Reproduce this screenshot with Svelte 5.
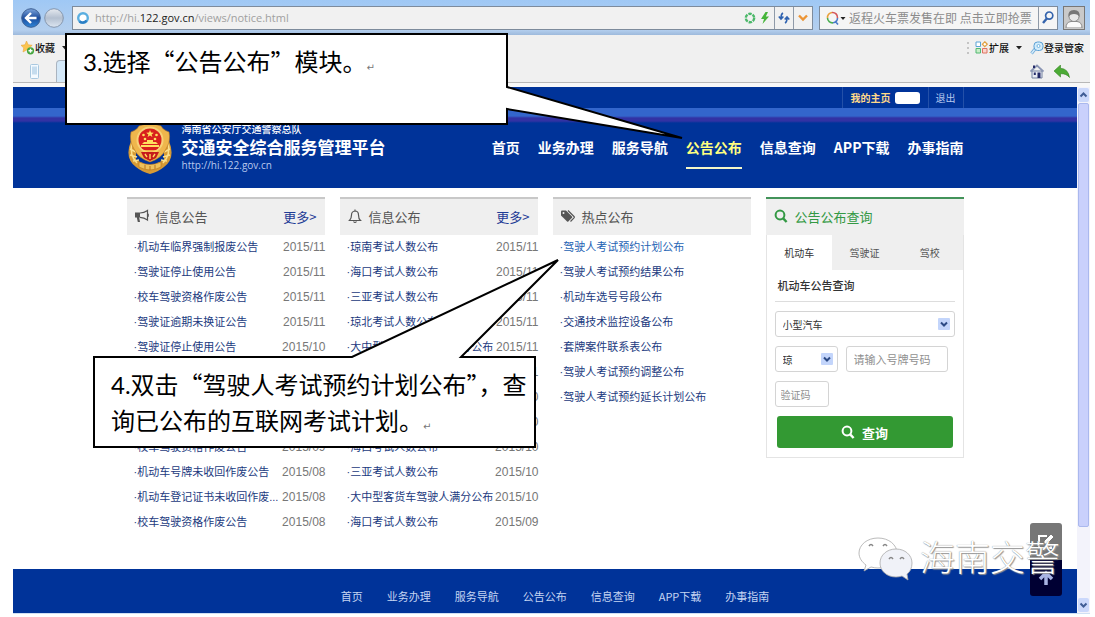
<script>
  const nav = ['首页', '业务办理', '服务导航', '公告公布', '信息查询', 'APP下载', '办事指南'];
  const notices = [
    ['机动车临界强制报废公告', '2015/11'],
    ['驾驶证停止使用公告', '2015/11'],
    ['校车驾驶资格作废公告', '2015/11'],
    ['驾驶证逾期未换证公告', '2015/11'],
    ['驾驶证停止使用公告', '2015/10'],
    ['', ''],
    ['', ''],
    ['', ''],
    ['校车驾驶资格作废公告', '2015/09'],
    ['机动车号牌未收回作废公告', '2015/08'],
    ['机动车登记证书未收回作废...', '2015/08'],
    ['校车驾驶资格作废公告', '2015/08'],
  ];
  const releases = [
    ['琼南考试人数公布', '2015/11'],
    ['海口考试人数公布', '2015/11'],
    ['三亚考试人数公布', '2015/11'],
    ['琼北考试人数公布', '2015/11'],
    ['大中型客货车驾驶人满分公布', '2015/11'],
    ['', '2015/11'],
    ['', '2015/10'],
    ['', '2015/10'],
    ['海口考试人数公布', '2015/10'],
    ['三亚考试人数公布', '2015/10'],
    ['大中型客货车驾驶人满分公布', '2015/10'],
    ['海口考试人数公布', '2015/09'],
  ];
  const hot = [
    '驾驶人考试预约计划公布', '驾驶人考试预约结果公布', '机动车选号号段公布',
    '交通技术监控设备公布', '套牌案件联系表公布', '驾驶人考试预约调整公布', '驾驶人考试预约延长计划公布',
  ];
  const tabs = ['机动车', '驾驶证', '驾校'];
  let tab = $state('机动车');
</script>

{#snippet rows(items)}
  <ul class="list">
    {#each items as [title, date]}
      <li>{#if title}<a href="#item">·{title}</a>{/if}{#if date}<time>{date}</time>{/if}</li>
    {/each}
  </ul>
{/snippet}

{#snippet magnifier()}
  <svg width="14" height="14" viewBox="0 0 14 14" fill="none" stroke="currentColor" aria-hidden="true">
    <circle cx="6" cy="6" r="4.4" stroke-width="2" /><path d="M9.2 9.4 12.6 13" stroke-width="2.4" />
  </svg>
{/snippet}

{#snippet chevron()}
  <svg class="chev" width="12" height="12" viewBox="0 0 12 12" aria-hidden="true">
    <rect width="12" height="12" rx="1" fill="#c3d5fb" /><path d="M3 4.5 6 7.5 9 4.5" fill="none" stroke="#2c4a85" stroke-width="2" />
  </svg>
{/snippet}

<div class="window">
  <div class="address-row">
    <button class="round" aria-label="后退">
      <svg width="20" height="20" viewBox="0 0 20 20">
        <defs><linearGradient id="b" x2="0" y2="1"><stop stop-color="#7ea6dc" /><stop offset=".5" stop-color="#1c4c9c" /><stop offset="1" stop-color="#2f86d8" /></linearGradient></defs>
        <circle cx="10" cy="10" r="9.3" fill="url(#b)" stroke="#3e5f92" /><path d="M15.5 10H5.5M10 5 5 10l5 5" fill="none" stroke="#fff" stroke-width="2.4" />
      </svg>
    </button>
    <button class="round" aria-label="前进">
      <svg width="20" height="20" viewBox="0 0 20 20">
        <defs><linearGradient id="f" x2="0" y2="1"><stop stop-color="#e6eaf0" /><stop offset=".5" stop-color="#b4c0d0" /><stop offset="1" stop-color="#dce6f2" /></linearGradient></defs>
        <circle cx="10" cy="10" r="9.3" fill="url(#f)" stroke="#8596ad" />
      </svg>
    </button>
    <div class="field address">
      <svg width="14" height="14" viewBox="0 0 14 14"><circle cx="7" cy="7" r="4.8" fill="#fff" stroke="#5aaee0" stroke-width="2.4" /><path d="M3.5 10.5a4.8 4.8 0 0 0 7-1" fill="none" stroke="#2d7fc4" stroke-width="2.4" /></svg>
      <span class="url">http://hi.<b>122.gov.cn</b>/views/notice.html</span>
      <svg width="12" height="12" viewBox="0 0 12 12"><circle cx="6" cy="6" r="4.2" fill="none" stroke="#4cb86a" stroke-width="2.4" stroke-dasharray="3.4 1" /></svg>
      <svg width="8" height="12" viewBox="0 0 8 12"><path d="M4.5 0 0 7h3L1.5 12 8 4.500H4.800L7 0z" fill="#46b53a" /></svg>
      <button class="cell" aria-label="刷新"><svg width="12" height="12" viewBox="0 0 12 12" fill="none" stroke="#2f62b0" stroke-width="1.6"><path d="M5 1Q3 2 3 6M.8 4.500 3 7l2.400-2.500M7 11q2-1 2-5M6.700 7.500 9 5l2.300 2.500" /></svg></button>
      <button class="cell" aria-label="展开"><svg width="10" height="8" viewBox="0 0 10 8"><path d="M1 1.500 5 5.500 9 1.500" fill="none" stroke="#ec9434" stroke-width="2.400" /></svg></button>
    </div>
    <div class="field search">
      <svg width="20" height="14" viewBox="0 0 20 14" fill="none" stroke-width="1.600"><path d="M6 1.500A5 5 0 0 0 1.500 7" stroke="#e8a13c" /><path d="M1.500 7A5 5 0 0 0 7 11.800" stroke="#4aae50" /><path d="M6 1.500A5 5 0 0 1 11.500 7" stroke="#d4565a" /><path d="M11.500 7A5 5 0 0 1 7 11.800M9 10l3 3.500" stroke="#4b7bc9" /><path d="M14.500 6h5L17 9z" fill="#222" /></svg>
      <input aria-label="搜索" placeholder="返程火车票发售在即 点击立即抢票" />
      <button class="cell" aria-label="查找"><svg width="12" height="13" viewBox="0 0 12 13" fill="none" stroke="#3564ad"><circle cx="7.200" cy="4.600" r="3.600" stroke-width="1.700" /><path d="M4.800 7.400 1 12" stroke-width="2.400" /></svg></button>
    </div>
    <button class="avatar" aria-label="用户">
      <svg width="20" height="20" viewBox="0 0 20 20"><path d="M2 20q0-6 5-6.500h6q5 .5 5 6.500z" fill="#fafafa" stroke="#8a8a8a" /><circle cx="10" cy="8.500" r="5" fill="#e8e8e8" stroke="#8a8a8a" /><path d="M4.500 9Q3.500 2 10 2t5.500 7Q14 6 10 6T4.500 9z" fill="#777" /></svg>
    </button>
  </div>

  <div class="toolbar">
    <div class="tool-line">
      <svg width="14" height="14" viewBox="0 0 14 14"><path d="m5.500 0 1.700 3.800 4 .5-3 2.700.8 4-3.500-2L2 11l.8-4L0 4.300l4-.5z" fill="#fbc550" stroke="#e9a63c" stroke-width=".6" /><circle cx="9.500" cy="9.800" r="3.600" fill="#45a63f" /><path d="M9.500 7.800v4M7.500 9.800h4" stroke="#fff" stroke-width="1.400" /></svg>
      <button class="tool">收藏</button>
      <svg class="drop" width="6" height="4" viewBox="0 0 6 4"><path d="M0 0h6L3 3.500z" fill="#222" /></svg>
      <span class="fill"></span>
      <svg width="3" height="12" viewBox="0 0 3 12" fill="#c4c4c4"><path d="M0 0h2v2H0zM0 5h2v2H0zM0 10h2v2H0z" /></svg>
      <svg class="ext" width="13" height="13" viewBox="0 0 13 13" fill="#fff"><path d="M1 1h4.500v4.500H1z" stroke="#5aa4d8" /><path d="m9.800.8 2.500 2.400-2.500 2.500-2.400-2.500z" stroke="#e0a040" stroke-width="1.200" /><path d="M1 7.500h4.500V12H1z" fill="#c8eec8" stroke="#53b873" /><path d="M7.500 7.500H12V12H7.500z" fill="#fbd5cd" stroke="#dd7563" /></svg>
      <button class="tool">扩展</button>
      <svg class="drop ext-drop" width="6" height="4" viewBox="0 0 6 4"><path d="M0 0h6L3 3.500z" fill="#222" /></svg>
      <svg width="14" height="14" viewBox="0 0 14 14"><path d="M5 8 1.500 12.500" stroke="#70aad8" stroke-width="3" /><path d="M5 8 1.500 12.500" stroke="#d3ecfb" stroke-width="1.400" /><rect x="4" y="1" width="9" height="8.500" rx="3.500" fill="#d3ecfb" stroke="#5aa0d5" /><circle cx="8.500" cy="5" r="1.500" fill="#fff" stroke="#73b4df" /></svg>
      <button class="tool">登录管家</button>
    </div>
    <div class="tool-line tab-line">
      <span class="phone-tab"><svg width="9" height="15" viewBox="0 0 9 15"><rect x=".5" y=".5" width="8" height="14" rx="1" fill="#f4faff" stroke="#a9c8e0" /><path d="M2 2.500h5v8H2z" fill="#c5dcee" /></svg></span>
      <span class="page-tab"></span>
      <span class="fill"></span>
      <svg width="14" height="15" viewBox="0 0 14 15"><path d="M2 7h10v7H2z" fill="#e8ebf4" stroke="#7582a0" /><path d="M.5 7.500 7 1.500l6.500 6" fill="none" stroke="#8a95b4" stroke-width="1.800" /><path d="M7.500 8.500h3V14h-3zM3 1.500h2V4H3z" fill="#242a68" /><path d="M3.800 8.500h2V11h-2z" fill="#242a68" /></svg>
      <svg class="reply" width="16" height="13" viewBox="0 0 16 13"><path d="M6.500 0v3.300Q14 3.500 15.500 12.500 12.500 8.500 6.500 8.700V12L0 6z" fill="#4cab35" stroke="#358425" stroke-width=".6" /></svg>
    </div>
  </div>

  <div class="viewport">
    <div class="site">
      <div class="topbar"><div class="container account">
        <a class="home" href="#home">我的主页<i></i></a><a class="exit" href="#exit">退出</a>
      </div></div>
      <div class="stripe"></div>
      <header><div class="container head">
        <svg class="crest" width="46" height="52" viewBox="0 0 46 52" aria-hidden="true">
          <path d="M4 18Q-3 35 9 44q6 5 14 7 8-2 14-7 12-9 5-26l-5 5v14L23 43 9 37V23z" fill="#d79b35" />
          <path d="M5 19Q2 32 10 40M3 26l6 3M3 32l7 2M6 38l6-1M41 19q3 13-5 21M43 26l-6 3M43 32l-7 2M40 38l-6-1" fill="none" stroke="#fbe08c" stroke-width="1.600" />
          <path d="M23 0 34 3Q36 7 42 9q2 9-3 17-4 9-16 13Q11 35 7 26 2 18 4 9q6-2 8-6z" fill="#efb64c" stroke="#b9751f" stroke-width=".6" />
          <circle cx="23" cy="17" r="13.500" fill="#f7d277" /><circle cx="23" cy="17" r="11.500" fill="#d8201d" />
          <path d="m23 7 1 2.600 2.800.1-2.200 1.700.8 2.700-2.400-1.500-2.400 1.500.8-2.700-2.200-1.700 2.800-.1z" fill="#ffe05e" />
          <g fill="#ffe05e"><circle cx="16.500" cy="12" r="1.300" /><circle cx="29.500" cy="12" r="1.300" /><circle cx="18" cy="16" r="1.300" /><circle cx="28" cy="16" r="1.300" /><path d="M14 22h18v2H14zM17 19h12l2 2H15zM20 17h6v2h-6z" /></g>
          <path d="M14 29h18l-3 6-6 3-6-3z" fill="#c51a1c" /><path d="M16 28h14M23 31v5M18 31l2 3M28 31l-2 3" stroke="#ffd75c" stroke-width="1.400" />
          <path d="M12 39q11 5 22 0v5q-11 6-22 0z" fill="#eec15c" stroke="#b9751f" stroke-width=".6" /><path d="M18 42v4M23 43v4M28 42v4" stroke="#b9751f" />
        </svg>
        <div class="brand"><span>海南省公安厅交通警察总队</span><strong>交通安全综合服务管理平台</strong><small>http://hi.122.gov.cn</small></div>
        <nav>{#each nav as n}<a href="#nav" class:active={n === '公告公布'}>{n}</a>{/each}</nav>
      </div></header>

      <main class="container columns">
        <section>
          <h2>
            <svg width="14" height="14" viewBox="0 0 14 14"><path d="M0 3.500h5v5h-.800L5 13H2.800L1.800 8.500H0z" fill="#555" /><path d="M5 4Q9 4 12.500 1.500v9.500Q9 8.500 5 8.300" fill="none" stroke="#555" stroke-width="1.200" /><path d="M13 4.800v3" stroke="#555" stroke-width="1.600" /></svg>
            信息公告<a href="#more">更多&gt;</a>
          </h2>
          {@render rows(notices)}
        </section>
        <section>
          <h2>
            <svg width="14" height="15" viewBox="0 0 14 15" fill="none" stroke="#555" stroke-width="1.200"><path d="M1.500 11.500Q3.500 9.500 3.500 6T7 2q3.500 0 3.500 4t2 5.500zM7 .5V2M5.500 12.500Q7 14.500 8.500 12.500" /></svg>
            信息公布<a href="#more">更多&gt;</a>
          </h2>
          {@render rows(releases)}
        </section>
        <section>
          <h2>
            <svg width="14" height="14" viewBox="0 0 14 14" fill="#555"><path d="M0 2.500Q0 1.500 1 1.500h4L11 7.500q.5.700 0 1.300L7.300 12.500q-.6.500-1.200 0L0 6.500z" /><circle cx="2.500" cy="4" r="1" fill="#eee" /><path d="M7 1.500 13 7.500q.6.700 0 1.400L9.500 12.500" fill="none" stroke="#555" stroke-width="1.200" /></svg>
            热点公布
          </h2>
          <ul class="list">
            {#each hot as h, i}<li><a href="#hot" class:hover={i === 0}>·{h}</a></li>{/each}
          </ul>
        </section>
        <section class="query">
          <h2>{@render magnifier()}公告公布查询</h2>
          <div class="tabs" role="tablist">
            {#each tabs as t}<button role="tab" aria-selected={tab === t} class:on={tab === t} onclick={() => (tab = t)}>{t}</button>{/each}
          </div>
          <form onsubmit={(e) => e.preventDefault()}>
            <h3>机动车公告查询</h3>
            <div class="pick"><select aria-label="车辆类型"><option>小型汽车</option></select>{@render chevron()}</div>
            <div class="pair">
              <div class="pick"><select aria-label="省份"><option>琼</option></select>{@render chevron()}</div>
              <input class="plate" aria-label="号牌号码" placeholder="请输入号牌号码" />
            </div>
            <input class="code" aria-label="验证码" placeholder="验证码" />
            <button class="submit">{@render magnifier()}查询</button>
          </form>
        </section>
      </main>

      <footer>{#each nav as n}<a href="#foot">{n}</a>{/each}</footer>
    </div>
    <div class="scroll">
      <svg width="11" height="14" viewBox="0 0 11 14"><rect width="11" height="14" rx="2" fill="#cbd8fb" /><path d="M2.500 8.500 5.500 5.500 8.500 8.500" fill="none" stroke="#3f5c95" stroke-width="2" /></svg>
      <div class="thumb"></div>
      <svg width="11" height="14" viewBox="0 0 11 14"><rect width="11" height="14" rx="2" fill="#cbd8fb" /><path d="M2.500 5.500 5.500 8.500 8.500 5.500" fill="none" stroke="#3f5c95" stroke-width="2" /></svg>
    </div>
  </div>

  <div class="floaters">
    <button aria-label="反馈"><svg width="18" height="18" viewBox="0 0 18 18" fill="none" stroke="#fff" stroke-width="2"><path d="M10 3H2v12h12v-4" /><path d="M7 11V8l7-7 3 3-7 7z" fill="#fff" stroke="#777" stroke-width="1" /></svg></button>
    <button class="up" aria-label="返回顶部"><svg width="16" height="16" viewBox="0 0 16 16"><path d="M8 15V4M2 9l6-6 6 6" fill="none" stroke="#a9b4e4" stroke-width="3.500" /></svg></button>
  </div>

  <div class="watermark">
    <svg width="56" height="44" viewBox="0 0 56 44" stroke="#aaa" stroke-width=".8" fill="#fff">
      <path d="M20 1C9 1 1 8 1 16c0 5 3 9 7 12l-2 6 7-4q4 1 7 1c11 0 19-7 19-15S31 1 20 1z" fill-opacity=".95" />
      <path d="M38 12c-9 0-16 6-16 14s7 14 16 14q3 0 6-1l6 4-1-6c3-2 5-6 5-11 0-8-7-14-16-14z" fill="#f0f2f8" />
      <path d="M11 9q2-3 4 0M25 9q2-3 4 0M31 22q2-3 4 0M42 22q2-3 4 0" fill="none" stroke="#888" stroke-width="1.500" />
    </svg>
    <span>海南交警</span>
  </div>

  <div class="callout note-three">
    <svg width="620" height="108" viewBox="0 0 620 108"><path d="M1 1H442V54L617 105 442 76V91H1z" fill="#fff" stroke="#000" stroke-width="2" /></svg>
    <p><b>3.</b>选择“公告公布”模块。<i>↵</i></p>
  </div>
  <div class="callout note-four">
    <svg width="468" height="190" viewBox="0 0 468 190"><path d="M1 98H259L465 1 368 98H442V188H1z" fill="#fff" stroke="#000" stroke-width="2" /></svg>
    <p><b>4.</b>双击“驾驶人考试预约计划公布”，查<br />询已公布的互联网考试计划。<i>↵</i></p>
  </div>
</div>

<style>
  :global(body) { background: #fff; }
  * { box-sizing: border-box; }
  svg { display: block; flex: none; }
  a { color: inherit; text-decoration: none; }
  button, input, select { font: inherit; color: inherit; margin: 0; padding: 0; border: 0; background: none; border-radius: 0; }
  h2, h3, p, ul { margin: 0; padding: 0; font-weight: 400; }
  .window { position: relative; margin: 0 5px 0 13px; font-family: "Noto Sans CJK SC", sans-serif; font-size: 11px; }

  .address-row { display: flex; align-items: center; height: 35px; padding: 0 5px 0 8px; background: linear-gradient(#9fc8f5, #b4cfee 30px, #9db9dc); }
  .round { width: 20px; height: 20px; margin-right: 3px; }
  .field { display: flex; align-items: center; height: 24px; border: 1px solid #7d8b9c; background: #f1f1f1; }
  .address { flex: 1; min-width: 0; margin: 0 6px 0 5px; padding-left: 3px; gap: 5px; }
  .url { flex: 1; overflow: hidden; white-space: nowrap; font-family: "Open Sans", sans-serif; font-size: 11px; color: #a0a0a0; }
  .url b { font-weight: 400; color: #222; }
  .cell { display: grid; place-items: center; width: 19px; height: 22px; border-left: 1px solid #8f9aa8; }
  .address .cell + .cell { margin-left: -5px; }
  .search { width: 239px; padding-left: 6px; background: #f5f5f5; }
  .search input { flex: 1; min-width: 0; margin-left: 3px; font-size: 12px; outline: 0; }
  .search input::placeholder { color: #8c8c8c; opacity: 1; }
  .avatar { width: 22px; height: 24px; margin-left: 5px; display: grid; place-items: center; border: 1px solid #777; background: #c9c9c9; }

  .toolbar { height: 52px; background: #f0f0f0; border-bottom: 4px solid #f8f8f8; }
  .tool-line { display: flex; align-items: center; height: 25px; padding: 0 6px 0 8px; font-size: 10px; color: #111; }
  .tool { font-weight: 500; white-space: nowrap; }
  .drop { margin-left: 7px; }
  .fill { flex: 1; }
  .ext { margin: 0 1px 0 5px; }
  .ext-drop { margin-right: 8px; }
  .tab-line { height: 23px; padding: 0 20px 0 0; border-bottom: 1px solid #b8b8b8; }
  .phone-tab { display: grid; place-items: center; width: 43px; }
  .page-tab { width: 60px; height: 22px; border: 1px solid #aab4c0; border-bottom: 0; border-radius: 4px 0 0 0; background: #d4e8f8; }
  .reply { margin-left: 10px; }

  .viewport { display: flex; border-bottom: 1px solid #cfe0f4; }
  .site { flex: 1; min-width: 0; }
  .container { width: calc(100% - 40px); max-width: 837px; margin: 0 auto; }
  .topbar { background: #003399; }
  .account { display: flex; justify-content: flex-end; height: 21px; font-size: 10px; line-height: 21px; }
  .account a { padding: 0 8px; border-left: 1px solid #2350a8; }
  .account .home { display: flex; align-items: center; gap: 4px; font-weight: 700; color: #ffd98a; }
  .account i { width: 25px; height: 12px; border-radius: 3px; background: #fff; }
  .account .exit { padding: 0 7px; border-right: 1px solid #2350a8; color: #b5c8ee; }
  .stripe { height: 15px; background: linear-gradient(#3366cc 8px, #3232a4 10px, #3232a4 13px, #003399); }
  header { height: 65px; background: #003399; color: #fff; }
  .head { display: flex; align-items: flex-start; }
  .brand { display: flex; flex-direction: column; margin-left: 9px; white-space: nowrap; }
  .brand span { font-size: 10px; line-height: 11px; font-weight: 500; }
  .brand strong { font-size: 17px; line-height: 25px; }
  .brand small { font-family: "Open Sans", sans-serif; font-size: 10px; line-height: 12px; color: #b9c9ee; }
  nav { display: flex; gap: 18px; margin-left: auto; font-size: 14px; font-weight: 700; line-height: 24px; white-space: nowrap; }
  nav a { margin-top: 12px; height: 34px; }
  nav .active { color: #ffff80; border-bottom: 2px solid #f4f6c8; }

  .columns { display: grid; grid-template-columns: repeat(4, minmax(0, 1fr)); gap: 15px; padding: 9px 0 34px; }
  h2 { display: flex; align-items: center; gap: 7px; height: 38px; padding: 0 8px 2px; border-top: 2px solid #c8c8c8; background: #efefef; font-size: 13px; color: #555; }
  h2 a { margin-left: auto; color: #1f3c96; }
  .list { list-style: none; font-family: "Liberation Sans", "Noto Sans CJK SC", sans-serif; }
  .list li { display: flex; height: 25px; line-height: 25px; padding-left: 7px; white-space: nowrap; }
  .list a { color: #1b3a80; }
  .list a.hover { color: #2563b4; }
  time { flex: none; margin: 0 -1px 0 auto; font-size: 12px; color: #777; }

  .query { align-self: start; border: 1px solid #e4e4e4; border-top: 0; }
  .query h2 { margin: 0 -1px; color: #339944; border-color: #43935a; }
  .tabs { display: flex; background: #efefef; font-size: 10px; color: #555; }
  .tabs button { flex: 1; height: 35px; }
  .tabs .on { background: #fff; color: #333; }
  form { display: flex; flex-direction: column; align-items: flex-start; gap: 9px; padding: 0 8px 9px; }
  h3 { width: 100%; height: 32px; padding-left: 3px; border-bottom: 1px solid #ddd; font-size: 11px; line-height: 31px; color: #333; font-weight: 500; }
  .pick { display: grid; width: 100%; align-items: center; }
  .pick select { grid-area: 1 / 1; width: 100%; appearance: none; }
  .pick :global(.chev) { grid-area: 1 / 1; justify-self: end; margin-right: 5px; pointer-events: none; }
  select, form input { height: 26px; padding: 0 7px; border: 1px solid #d4d4d4; border-radius: 3px; font-size: 10px; color: #333; background: #fff; min-width: 0; }
  form input::placeholder { color: #909090; opacity: 1; }
  .pair { display: grid; grid-template-columns: 63px 102px; gap: 8px; }
  .plate { font-size: 11px; }
  form .code { width: 54px; padding: 0 5px; }
  .submit { display: flex; align-items: center; justify-content: center; gap: 7px; width: calc(100% - 4px); height: 32px; margin: 0 2px; border-radius: 3px; background: #339933; color: #fff; font-size: 13px; font-weight: 700; }

  footer { display: flex; justify-content: center; gap: 24px; height: 44px; padding: 5px 0 0 20px; background: #003399; color: #c5d5f2; line-height: 44px; white-space: nowrap; }

  .scroll { display: flex; flex-direction: column; align-items: center; width: 13px; padding: 1px 0; background: #f3f3fb; }
  .thumb { width: 11px; height: 424px; margin: 1px 0 auto; border: 1px solid #aab8ee; border-radius: 2px; background: #c9d0fc; }

  .floaters { position: absolute; right: 28px; bottom: 18px; display: grid; gap: 0; width: 32px; border-radius: 3px; overflow: hidden; }
  .floaters button { display: grid; place-items: center; height: 37px; background: #777; }
  .floaters .up { height: 36px; background: #000033; }
  .watermark { position: absolute; right: 30px; bottom: 30px; display: flex; align-items: center; gap: 6px; color: #fff; font-size: 35px; font-weight: 300; line-height: 44px; text-shadow: 0 0 1px #777, 1px 1px 1px #999; white-space: nowrap; pointer-events: none; }
  .watermark span { padding-bottom: 6px; }

  .callout { position: absolute; color: #000; font-size: 24px; font-weight: 300; line-height: 35px; pointer-events: none; }
  .callout p { position: absolute; left: 18px; white-space: nowrap; }
  .callout b { font-family: Lato, sans-serif; font-weight: 400; }
  .callout i { font-family: "DejaVu Sans", sans-serif; font-size: 10px; font-style: normal; color: #777; }
  .note-three { left: 52px; top: 33px; }
  .note-three p { top: 10px; }
  .note-four { left: 80px; top: 259px; }
  .note-four p { top: 107px; }
</style>
